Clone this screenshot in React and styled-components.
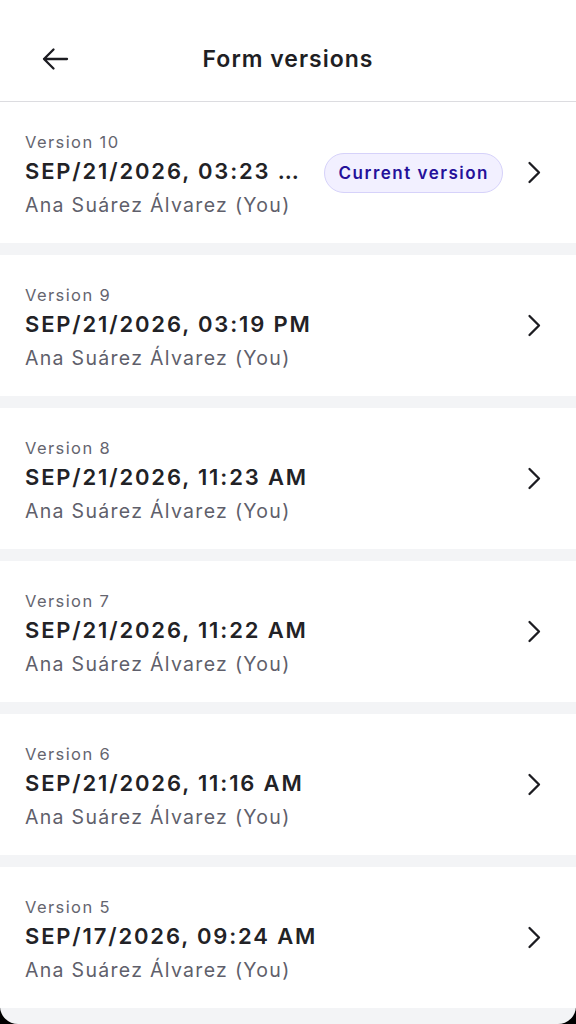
import React from 'react';
import styled, { createGlobalStyle } from 'styled-components';

const GlobalStyle = createGlobalStyle`
  html, body {
    margin: 0;
    padding: 0;
    background: #000;
  }
  body {
    font-family: Inter, "Noto Sans", "Liberation Sans", sans-serif;
    -webkit-font-smoothing: antialiased;
  }
`;

const Screen = styled.div`
  height: 1024px;
  overflow: hidden;
  background: #f3f4f6;
  border-bottom-left-radius: 18px;
  border-bottom-right-radius: 18px;
`;

const Header = styled.header`
  height: 102px;
  box-sizing: border-box;
  padding-top: 16px;
  display: flex;
  align-items: center;
  position: relative;
  background: #fff;
  border-bottom: 1px solid #dcdce0;
`;

const BackButton = styled.button`
  margin-left: 40px;
  width: 30px;
  height: 30px;
  padding: 0;
  border: none;
  background: none;
  display: flex;
  align-items: center;
  justify-content: center;
  color: #1c1c21;
  cursor: pointer;
`;

const Title = styled.h1`
  position: absolute;
  left: 0;
  right: 0;
  margin: 0;
  text-align: center;
  font-size: 23px;
  font-weight: 600;
  letter-spacing: 1px;
  color: #1f1f24;
  pointer-events: none;
`;

const List = styled.div`
  display: flex;
  flex-direction: column;
  gap: 12px;
`;

const Row = styled.div`
  display: flex;
  align-items: center;
  background: #fff;
  height: 141px;
  box-sizing: border-box;
  padding: 0 35px 0 25px;
`;

const Info = styled.div`
  flex: 1;
  min-width: 0;
  display: flex;
  flex-direction: column;
  padding-top: 5px;
`;

const Label = styled.div`
  font-size: 16.5px;
  line-height: 24px;
  letter-spacing: 1.4px;
  color: #65656f;
`;

const DateText = styled.div`
  font-size: 22px;
  line-height: 34px;
  font-weight: 600;
  color: #222226;
  letter-spacing: 1.85px;
  white-space: nowrap;
  overflow: hidden;
  text-overflow: ellipsis;
`;

const Author = styled.div`
  margin-top: 2px;
  font-size: 19.5px;
  line-height: 30px;
  letter-spacing: 1.3px;
  color: #5f5f6b;
`;

const Badge = styled.span`
  flex-shrink: 0;
  margin-left: 24px;
  height: 40px;
  box-sizing: border-box;
  padding: 0 13px 0 14px;
  display: inline-flex;
  align-items: center;
  border-radius: 20px;
  background: #f2f0ff;
  border: 1px solid #d6d2fa;
  color: #25109a;
  font-size: 17px;
  font-weight: 600;
  letter-spacing: 1.5px;
`;

const Chevron = styled.span`
  flex-shrink: 0;
  margin-left: 24px;
  display: flex;
  color: #1c1c21;
`;

const versions = [
  { n: 10, date: 'SEP/21/2026, 03:23 PM', current: true },
  { n: 9, date: 'SEP/21/2026, 03:19 PM' },
  { n: 8, date: 'SEP/21/2026, 11:23 AM' },
  { n: 7, date: 'SEP/21/2026, 11:22 AM' },
  { n: 6, date: 'SEP/21/2026, 11:16 AM' },
  { n: 5, date: 'SEP/17/2026, 09:24 AM' },
];

export default function App() {
  return (
    <>
      <GlobalStyle />
      <Screen>
        <Header>
          <BackButton aria-label="Back">
            <svg width="28" height="24" viewBox="0 0 28 24" fill="none">
              <path
                d="M26 12H3M12.5 2.5L3 12l9.5 9.5"
                stroke="currentColor"
                strokeWidth="2.3"
                strokeLinecap="round"
                strokeLinejoin="round"
              />
            </svg>
          </BackButton>
          <Title>Form versions</Title>
        </Header>
        <List>
          {versions.map((v) => (
            <Row key={v.n}>
              <Info>
                <Label>Version {v.n}</Label>
                <DateText>{v.date}</DateText>
                <Author>Ana Suárez Álvarez (You)</Author>
              </Info>
              {v.current && <Badge>Current version</Badge>}
              <Chevron>
                <svg width="14" height="24" viewBox="0 0 14 24" fill="none">
                  <path
                    d="M2.5 2L12 11.5 2.5 21"
                    stroke="currentColor"
                    strokeWidth="2.3"
                    strokeLinecap="round"
                    strokeLinejoin="round"
                  />
                </svg>
              </Chevron>
            </Row>
          ))}
        </List>
      </Screen>
    </>
  );
}
